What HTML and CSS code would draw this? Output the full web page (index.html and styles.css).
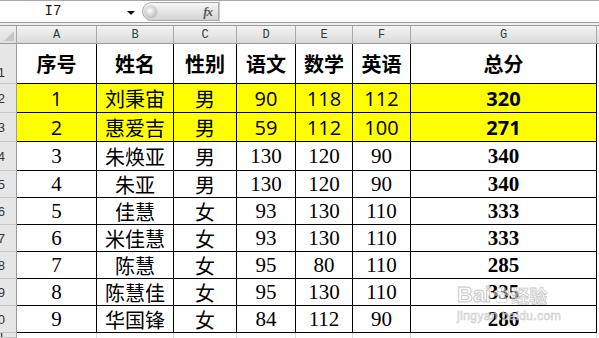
FILE: index.html
```html
<!DOCTYPE html>
<html>
<head>
<meta charset="utf-8">
<link rel="stylesheet" href="styles.css">
</head>
<body>
<div class="fbar">
  <div class="namebox"><span class="name">I7</span><span class="arrow"></span></div>
  <div class="fxbtn"><span class="knob"></span><span class="fx">fx</span></div>
  <div class="formula"></div>
</div>
<div class="gap"></div>
<div class="sheet">
  <div class="corner"><span class="tri"></span></div>
  <div class="ch">A</div><div class="ch">B</div><div class="ch">C</div><div class="ch">D</div><div class="ch">E</div><div class="ch">F</div><div class="ch">G</div><div class="ch last"></div>

  <div class="rh r1">1</div>
  <div class="c hd">序号</div><div class="c hd">姓名</div><div class="c hd">性别</div><div class="c hd">语文</div><div class="c hd">数学</div><div class="c hd">英语</div><div class="c hd">总分</div><div class="e"></div>

  <div class="rh">2</div>
  <div class="c y num">1</div><div class="c y cjk">刘秉宙</div><div class="c y cjk">男</div><div class="c y num">90</div><div class="c y num">118</div><div class="c y num">112</div><div class="c y num b">320</div><div class="e"></div>

  <div class="rh">3</div>
  <div class="c y num">2</div><div class="c y cjk">惠爱吉</div><div class="c y cjk">男</div><div class="c y num">59</div><div class="c y num">112</div><div class="c y num">100</div><div class="c y num b">271</div><div class="e"></div>

  <div class="rh">4</div>
  <div class="c s">3</div><div class="c cjk">朱焕亚</div><div class="c cjk">男</div><div class="c s">130</div><div class="c s">120</div><div class="c s">90</div><div class="c s b">340</div><div class="e"></div>

  <div class="rh">5</div>
  <div class="c s">4</div><div class="c cjk">朱亚</div><div class="c cjk">男</div><div class="c s">130</div><div class="c s">120</div><div class="c s">90</div><div class="c s b">340</div><div class="e"></div>

  <div class="rh">6</div>
  <div class="c s">5</div><div class="c cjk">佳慧</div><div class="c cjk">女</div><div class="c s">93</div><div class="c s">130</div><div class="c s">110</div><div class="c s b">333</div><div class="e"></div>

  <div class="rh">7</div>
  <div class="c s">6</div><div class="c cjk">米佳慧</div><div class="c cjk">女</div><div class="c s">93</div><div class="c s">130</div><div class="c s">110</div><div class="c s b">333</div><div class="e"></div>

  <div class="rh">8</div>
  <div class="c s">7</div><div class="c cjk">陈慧</div><div class="c cjk">女</div><div class="c s">95</div><div class="c s">80</div><div class="c s">110</div><div class="c s b">285</div><div class="e"></div>

  <div class="rh">9</div>
  <div class="c s">8</div><div class="c cjk">陈慧佳</div><div class="c cjk">女</div><div class="c s">95</div><div class="c s">130</div><div class="c s">110</div><div class="c s b">335</div><div class="e"></div>

  <div class="rh">10</div>
  <div class="c s">9</div><div class="c cjk">华国锋</div><div class="c cjk">女</div><div class="c s">84</div><div class="c s">112</div><div class="c s">90</div><div class="c s b">286</div><div class="e"></div>

  <div class="rh">11</div>
  <div class="g"></div><div class="g"></div><div class="g"></div><div class="g"></div><div class="g"></div><div class="g"></div><div class="g"></div><div class="e"></div>
</div>
<div class="watermark">
  <div class="wm1"><span class="bai">Bai</span><svg class="paw" width="18" height="18" viewBox="0 0 18 18"><ellipse cx="4" cy="7" rx="2" ry="2.6"/><ellipse cx="7.5" cy="3.5" rx="2" ry="2.6"/><ellipse cx="11.5" cy="3.5" rx="2" ry="2.6"/><ellipse cx="15" cy="7" rx="2" ry="2.6"/><path d="M9.5 8c-2.5 0-5.5 4-5.5 6.5 0 2 2 2.5 3 2.3 1-.2 1.6-.5 2.5-.5s1.5.3 2.5.5c1 .2 3-.3 3-2.3C15 12 12 8 9.5 8z"/></svg><span class="jy">经验</span></div>
  <div class="wm2">jingyan.baidu.com</div>
</div>
</body>
</html>
```

FILE: styles.css
```css
html, body {
  margin: 0;
  padding: 0;
}
body {
  width: 599px;
  height: 338px;
  overflow: hidden;
  background: #fff;
  position: relative;
  font-family: "Noto Sans CJK SC", "Liberation Sans", sans-serif;
}

/* formula bar */
.fbar {
  height: 23px;
  box-sizing: border-box;
  border-top: 1px solid #a8a8a8;
  border-bottom: 1px solid #a0a0a0;
  display: flex;
  align-items: stretch;
  background: #fff;
}
.namebox {
  width: 141px;
  display: flex;
  align-items: center;
}
.name {
  width: 106px;
  text-align: center;
  font-family: "Liberation Mono", "DejaVu Sans Mono", monospace;
  font-size: 14px;
  color: #111;
  line-height: 21px;
}
.arrow {
  margin-left: 21px;
  width: 0;
  height: 0;
  border-left: 4px solid transparent;
  border-right: 4px solid transparent;
  border-top: 4px solid #111;
  margin-top: 2px;
}
.fxbtn {
  width: 77px;
  margin: 1px 0 0 1px;
  height: 19px;
  box-sizing: border-box;
  border: 1px solid #a9a9a9;
  border-radius: 10px 0 0 10px;
  background: linear-gradient(#f6f6f6, #e2e2e2 60%, #d3d3d3);
  display: flex;
  align-items: center;
  justify-content: space-between;
  padding: 0 6px 0 2px;
}
.knob {
  width: 12px;
  height: 12px;
  border-radius: 50%;
  background: radial-gradient(circle at 40% 40%, #ffffff, #c8c8c8 60%, #9e9e9e);
  box-shadow: 0 0 0 1px #d6d6d6;
}
.fx {
  font-family: "Liberation Serif", serif;
  font-style: italic;
  font-weight: bold;
  font-size: 13px;
  color: #5a5a5a;
  letter-spacing: -1px;
}
.formula {
  flex: 1;
  border-left: 1px solid #c8c8c8;
}
.gap {
  height: 2px;
  background: #eeeeee;
  border-bottom: 1px solid #9a9a9a;
}

/* sheet grid */
.sheet {
  display: grid;
  grid-template-columns: 17px 80px 77px 63px 59px 57px 58px 186px 1fr;
  grid-template-rows: 18px 40px 29px 29px 29px 27px 27px 27px 27px 27px 27px 1fr;
  height: 312px;
}
.sheet > div {
  box-sizing: border-box;
  min-width: 0;
}
.corner {
  background: linear-gradient(#efefef, #dedede);
  border-right: 1px solid #a4a4a4;
  border-bottom: 1px solid #9a9a9a;
  position: relative;
}
.tri {
  position: absolute;
  right: 2px;
  bottom: 2px;
  width: 0;
  height: 0;
  border-left: 10px solid transparent;
  border-bottom: 10px solid #c6c6c6;
}
.ch {
  background: linear-gradient(#f3f3f3, #e6e6e6 55%, #d9d9d9);
  border-right: 1px solid #a8a8a8;
  border-bottom: 1px solid #9a9a9a;
  font-family: "Liberation Mono", "DejaVu Sans Mono", monospace;
  font-size: 12px;
  color: #2c3e3e;
  display: flex;
  align-items: center;
  justify-content: center;
}
.ch.last {
  border-right: none;
}
.rh {
  background: #e6e6e6;
  border-right: 1px solid #9c9c9c;
  border-bottom: 1px solid #c6c6c6;
  font-family: "Liberation Sans", sans-serif;
  font-size: 13px;
  color: #333;
  overflow: hidden;
  display: flex;
  align-items: center;
  justify-content: flex-end;
  padding-right: 11px;
  white-space: nowrap;
}
.rh.r1 {
  align-items: flex-end;
  padding-bottom: 3px;
}
.c {
  border-right: 1px solid #000;
  border-bottom: 1px solid #000;
  display: flex;
  align-items: center;
  justify-content: center;
  color: #000;
  white-space: nowrap;
  font-size: 20px;
}
.c.y {
  background: #ffff00;
}
.hd {
  font-family: "Noto Sans CJK SC", sans-serif;
  font-weight: 700;
  font-size: 20px;
}
.cjk {
  font-family: "Noto Sans CJK SC", sans-serif;
  font-size: 20px;
}
.num {
  font-family: "Open Sans", "Liberation Sans", sans-serif;
  font-size: 20px;
}
.s {
  font-family: "Liberation Serif", serif;
  font-size: 21px;
}
.b {
  font-weight: 700;
}
.e {
  background: #fff;
}
.g {
  border-right: 1px solid #d0d7e5;
}

/* watermark overlay */
.watermark {
  position: absolute;
  left: 457px;
  top: 284px;
  pointer-events: none;
}
.wm1 {
  display: flex;
  align-items: center;
  line-height: 22px;
}
.bai {
  font-family: "Liberation Sans", sans-serif;
  font-size: 22px;
  font-weight: bold;
  color: rgba(255, 255, 255, 0.55);
  -webkit-text-stroke: 1px rgba(185, 185, 185, 0.8);
}
.paw {
  fill: rgba(255, 255, 255, 0.5);
  stroke: rgba(185, 185, 185, 0.8);
  stroke-width: 0.8;
  margin: 0 1px 0 1px;
}
.jy {
  font-family: "Noto Sans CJK SC", sans-serif;
  font-size: 18px;
  font-weight: bold;
  color: rgba(255, 255, 255, 0.55);
  -webkit-text-stroke: 0.8px rgba(185, 185, 185, 0.8);
}
.wm2 {
  font-family: "Liberation Sans", sans-serif;
  font-size: 12.5px;
  line-height: 15px;
  margin-top: 3px;
  color: rgba(255, 255, 255, 0.55);
  -webkit-text-stroke: 0.6px rgba(185, 185, 185, 0.8);
  letter-spacing: 0.2px;
}
```
